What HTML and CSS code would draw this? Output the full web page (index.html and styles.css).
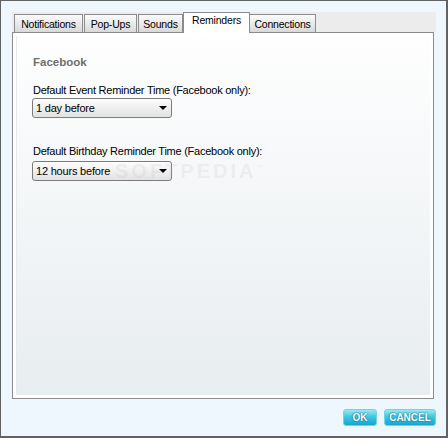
FILE: index.html
```html
<!DOCTYPE html>
<html lang="en">
<head>
  <meta charset="UTF-8">
  <title>Options</title>
  <link rel="stylesheet" href="styles.css">
</head>
<body>
  <div class="window">
    <div class="tabs">
      <div class="tab t-notif">Notifications</div>
      <div class="tab t-popups">Pop-Ups</div>
      <div class="tab t-sounds">Sounds</div>
      <div class="tab active t-remind">Reminders</div>
      <div class="tab t-conn">Connections</div>
    </div>
    <div class="panel">
      <div class="inner">
        <div class="heading">Facebook</div>
        <div class="label first">Default Event Reminder Time (Facebook only):</div>
        <div class="select">
          <span>1 day before</span>
          <i class="arrow"></i>
        </div>
        <div class="label second">Default Birthday Reminder Time (Facebook only):</div>
        <div class="select">
          <span>12 hours before</span>
          <i class="arrow"></i>
        </div>
        <div class="mark">SOFTPEDIA<sup>&trade;</sup></div>
      </div>
    </div>
    <div class="buttons">
      <div class="btn ok">OK</div>
      <div class="btn cancel">CANCEL</div>
    </div>
  </div>
</body>
</html>
```

FILE: styles.css
```css
body {
  margin: 0;
  font-family: "Liberation Sans", Arial, sans-serif;
  font-size: 11px;
  color: #000;
}
.window {
  box-sizing: border-box;
  width: 448px;
  height: 438px;
  background: #eef6fe;
  border: 1px solid #626262;
  border-right-width: 2px;
  border-bottom-width: 2px;
  padding: 11px 0 0 11px;
}
.tabs {
  display: flex;
  align-items: flex-end;
  width: 424px;
  height: 20px;
  background: #ececec;
  padding-left: 2px;
  box-sizing: border-box;
}
.tab {
  box-sizing: border-box;
  height: 18px;
  padding-top: 3px;
  margin-right: 1px;
  border: 1px solid #8c8c8c;
  border-bottom: none;
  background: linear-gradient(#fbfbfb, #d9d9d9);
  font-size: 10.5px;
  letter-spacing: -0.2px;
  text-align: center;
  white-space: nowrap;
}
.t-notif { width: 69px; }
.t-popups { width: 53px; }
.t-sounds { width: 45px; }
.t-remind { width: 67px; }
.t-conn { width: 67px; }
.tab.active {
  position: relative;
  z-index: 1;
  height: 21px;
  margin: 0 -1px -1px -1px;
  padding-top: 1px;
  background: #fff;
}
.panel {
  box-sizing: border-box;
  width: 422px;
  height: 367px;
  border: 1px solid #8c8c8c;
  background: #fff;
  padding: 3px;
}
.inner {
  position: relative;
  height: 100%;
  box-sizing: border-box;
  padding: 20px 16px 0 16px;
  background: linear-gradient(#fefefe, #e8edf0);
  border-left: 1px solid #e6eaec;
}
.heading {
  font-weight: bold;
  color: #6e6e6e;
  line-height: 13px;
  font-size: 11.5px;
}
.label {
  line-height: 13px;
  letter-spacing: -0.25px;
}
.label.first { margin-top: 15px; }
.label.second { margin-top: 27px; }
.select {
  box-sizing: border-box;
  width: 140px;
  height: 20px;
  margin: 1px 0 0 -1px;
  border: 1px solid #7c7c7c;
  border-radius: 3px;
  background: linear-gradient(#fdfdfd, #e2e2e2);
  display: flex;
  align-items: center;
  justify-content: space-between;
  padding: 0 4px 0 3px;
  letter-spacing: -0.2px;
}
.label.second + .select { margin-top: 3px; }
.arrow {
  width: 0;
  height: 0;
  border-left: 4px solid transparent;
  border-right: 4px solid transparent;
  border-top: 4px solid #000;
}
.mark {
  position: absolute;
  left: 98px;
  top: 124px;
  font-size: 20px;
  letter-spacing: 3px;
  color: rgba(180, 180, 180, 0.16);
  font-weight: bold;
}
.mark sup { font-size: 7px; }
.buttons {
  display: flex;
  justify-content: flex-end;
  gap: 7px;
  width: 424px;
  margin-top: 10px;
}
.btn {
  box-sizing: border-box;
  height: 17px;
  border-radius: 3px;
  border: 1px solid #6fd3e6;
  background: linear-gradient(#9ae9f3 0%, #3fc7e2 45%, #14a6d1 100%);
  color: #fff;
  font-weight: bold;
  font-size: 10px;
  line-height: 15px;
  text-align: center;
  text-shadow: 0 0 2px #0b6f8c, 0 0 1px #0b6f8c;
}
.ok { width: 34px; }
.cancel { width: 52px; }
```
